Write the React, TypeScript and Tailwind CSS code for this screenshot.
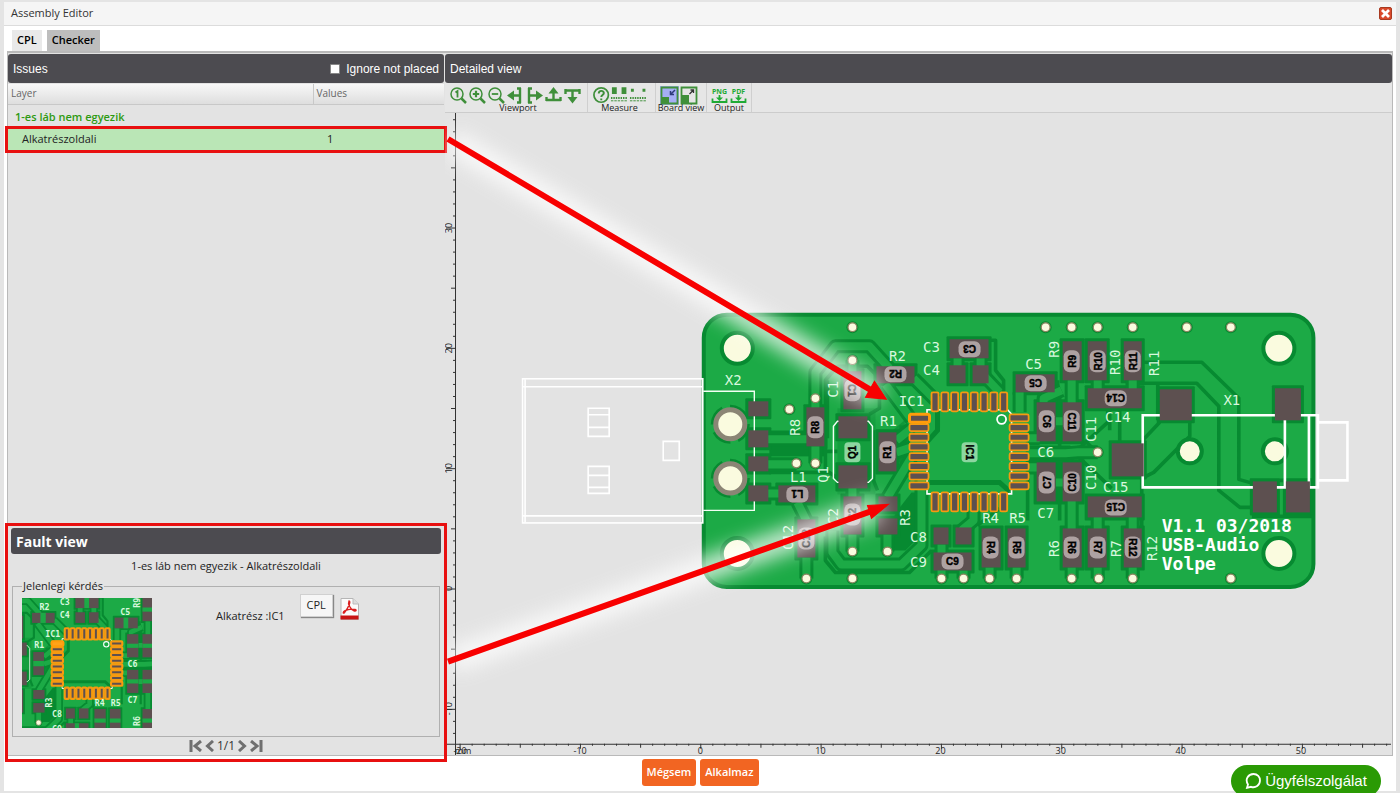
import { ReactNode, useState } from 'react';

type Rect = [x: number, y: number, w: number, h: number];
type Label = [text: string, x: number, y: number, rotate: number];

const BOARD = '#1caa46';
const CLEARANCE = '#078a31';
const PAD = '#5d5050';
const HOLE = '#fafbdf';

const pads: Rect[] = [
   [749, 401, 20, 15], [749, 430, 20, 17], [749, 456, 20, 15], [749, 485, 20, 16],
   [839, 416, 29, 22], [839, 465, 29, 23], [879, 496, 19, 15], [879, 518, 19, 16],
   [844, 371, 18, 38], [877, 366, 38, 17], [807, 407, 18, 39], [879, 432, 18, 39],
   [844, 496, 18, 38], [779, 485, 37, 17], [798, 519, 18, 38],
   [950, 339, 39, 19], [950, 365, 16, 18], [973, 365, 16, 18], [1016, 374, 39, 18],
   [1037, 402, 19, 39], [1063, 402, 19, 39], [1037, 462, 19, 39], [1063, 462, 19, 39],
   [1063, 341, 19, 39], [1088, 341, 19, 39], [1124, 341, 18, 39],
   [1088, 388, 54, 20], [1088, 496, 54, 21],
   [1063, 528, 19, 39], [1088, 528, 19, 39], [1124, 528, 18, 39],
   [982, 528, 19, 39], [1008, 528, 18, 39],
   [934, 527, 15, 17], [956, 527, 16, 17], [934, 552, 38, 18],
   [1160, 389, 32, 31], [1112, 443, 32, 33], [1275, 388, 26, 32], [1253, 481, 24, 31], [1286, 481, 24, 31],
];

// narrow gaps between two pads that no designator covers
const thumbGaps: Rect[] = [
   [891, 366, 9, 17], [879, 447, 18, 9], [965, 339, 8, 19], [1031, 374, 8, 18],
   [1037, 418, 19, 7], [1063, 418, 19, 7], [1037, 478, 19, 7], [1063, 478, 19, 7],
   [982, 544, 19, 7], [1008, 544, 18, 7], [1063, 544, 19, 7], [949, 552, 7, 18], [1063, 357, 19, 7],
];

const badges: Label[] = [
   ['C1', 853, 390, 90], ['R2', 896, 374, 180], ['R8', 816, 427, -90], ['R1', 888, 452, -90], ['C2', 853, 514, -90],
   ['L1', 798, 494, 180], ['C12', 807, 538, -90], ['C3', 970, 349, 180], ['C5', 1036, 383, 180],
   ['C6', 1047, 421, 90], ['C11', 1072, 421, 90], ['C7', 1047, 482, -90], ['C10', 1072, 482, -90],
   ['R9', 1072, 361, -90], ['R10', 1098, 361, -90], ['R11', 1133, 361, -90], ['C14', 1116, 398, 180], ['C15', 1116, 507, 180],
   ['R6', 1072, 547, 90], ['R7', 1098, 547, 90], ['R12', 1133, 547, 90], ['R4', 991, 547, 90], ['R5', 1017, 547, 90],
   ['C9', 953, 561, 0],
];

const silk: Label[] = [
   ['X2', 734, 380, 0], ['C1', 834, 389, -90], ['IC1', 912, 401, 0], ['R1', 889, 421, 0], ['R2', 898, 356, 0],
   ['C3', 932, 347, 0], ['C4', 932, 370, 0], ['C5', 1034, 364, 0], ['R9', 1054, 349, -90], ['R10', 1115, 362, -90],
   ['R11', 1154, 363, -90], ['C14', 1118, 417, 0], ['X1', 1232, 400, 0], ['C11', 1091, 429, -90], ['C10', 1091, 477, -90],
   ['C6', 1046, 452, 0], ['C7', 1046, 513, 0], ['C15', 1116, 487, 0], ['R8', 796, 427, -90], ['Q1', 824, 474, -90],
   ['L1', 799, 477, 0], ['C2', 834, 516, -90], ['R3', 906, 517, -90], ['C12', 789, 537, -90], ['R4', 991, 518, 0],
   ['R5', 1018, 518, 0], ['C8', 919, 537, 0], ['C9', 919, 562, 0], ['R6', 1054, 548, -90], ['R7', 1116, 548, -90],
   ['R12', 1152, 548, -90],
];

const vias: [number, number][] = [
   [853, 327], [853, 360], [816, 398], [790, 409], [797, 463], [816, 463], [853, 551], [888, 551], [807, 578], [853, 578],
   [1046, 327], [1072, 327], [1098, 327], [1133, 327], [1187, 327], [1231, 327], [1098, 452], [942, 578], [964, 578],
   [990, 578], [1017, 578], [1072, 578], [1099, 578], [1133, 578], [1231, 578],
];

// tracks that show as a pair of clearance lines
const tracks = [
   'M816 410V372L836 346H870L890 368',
   'M853 372V360M853 486V498M853 534V551M888 534V551M816 446V463M807 557V578M798 502L807 520',
   'M767 439H808M767 464H797M767 493H780',
   'M897 452L912 447M897 440L912 428M914 378L936 400M886 384L912 419M888 497L912 457',
   'M833 530V552L842 564H902L922 545V478',
   'M1028 453H1066L1078 452H1098M1028 438L1040 438M1028 467H1040M1020 412V392M1044 402V398L1062 390',
   'M1072 380V404M1098 380V390M1133 380V390M1072 500V530M1098 516V530M1133 516V530',
   'M981 358V366M958 358V366M983 374L1000 392M942 544V578M964 570V578M990 567V578M1017 567V578M1072 567V578M1098 567V578M1133 567V578',
   'M974 511V520L962 530M1056 482H1064M1056 421H1064',
];

// isolation lines in the ground pour
const isolation = [
   'M1142 362H1202L1239 398V479L1253 483',
   'M1126 383H1197L1219 406V490L1240 507H1254',
   'M1158 384V420M1160 422L1143 440M1190 420V436L1154 472L1142 478V540',
   'M928 482H1000L1012 492M940 412V432L930 441',
   'M1028 447H1070L1075 452L1108 422V408M1028 461H1070L1076 454L1112 488',
   'M826 470V380L838 366H868L880 378V408L870 414M828 438V380',
   'M826 536V560L836 572H910L932 550',
   'M770 432H806M770 472H830L842 480M826 451H838M874 430V480M874 480L878 490',
   'M989 340H996V370L1004 380V392M1000 508L978 525',
   'M1028 440V520M1060 392V520M1085 440L1100 455',
   'M1110 408V430M1120 410V444M1058 400V380',
   'M1250 480H1312M1252 516H1312',
];

function PcbBoard({ thumb = false }: { thumb?: boolean }) {
   const pins: Rect[] = [];
   for (let i = 0; i < 8; i++) {
      const across = 932 + i * 9.8;
      const down = 414 + i * 9.7;
      pins.push([across, 392, 7, 19], [across, 492, 7, 19], [910, down, 19, 7], [1010, down, 19, 7]);
   }
   const names = thumb ? silk.filter(([, x, y]) => x > 862 && x < 1077 && y > 343 && y < 563) : silk;

   return (
      <g>
         <rect x="704.5" y="314.5" width="609" height="272" rx="23" fill={BOARD} stroke={CLEARANCE} strokeWidth="4" />
         <g fill={CLEARANCE}>
            <rect x="770" y="445" width="56" height="11" />
            <rect x="838" y="408" width="38" height="86" opacity="0.35" />
            <rect x="900" y="425" width="10" height="52" opacity="0.7" />
            <path d="M905 420l-14 12v20l18 20z" opacity="0.6" />
            <path d="M884 534l14-24 14-18h6v46l-12 12h-22z" />
            {vias.map(([x, y]) => (
               <circle key={`${x}-${y}`} cx={x} cy={y} r="6" />
            ))}
            {pads.map(([x, y, w, h]) => (
               <rect key={`${x}-${y}`} x={x - 3} y={y - 3} width={w + 6} height={h + 6} rx="1" />
            ))}
         </g>
         <g fill="none" strokeLinejoin="round">
            <path d={isolation.join('')} stroke={CLEARANCE} strokeWidth="3.600" />
            <path d={tracks.join('')} stroke={CLEARANCE} strokeWidth="14" />
            <path d={tracks.join('')} stroke={BOARD} strokeWidth="8" />
         </g>
         <rect x="927" y="410" width="85" height="84" fill={BOARD} />
         <path d="M930 482H1000L1010 491M938 411V430L928 441" fill="none" stroke={CLEARANCE} strokeWidth="5" />

         {[[738, 348], [738, 553], [1279, 348], [1279, 553]].map(([x, y]) => (
            <circle key={`${x}-${y}`} cx={x} cy={y} r="15.5" fill={HOLE} stroke={CLEARANCE} strokeWidth="4" />
         ))}
         {[424, 478].map(y => (
            <g key={y}>
               <circle cx="731" cy={y} r="18" fill="none" stroke={CLEARANCE} strokeWidth="3" strokeDasharray="20 8" />
               <circle cx="731" cy={y} r="14.5" fill={HOLE} stroke="#8b8575" strokeWidth="5" />
            </g>
         ))}
         {[1190, 1275].map(x => (
            <circle key={x} cx={x} cy="451" r="12" fill={HOLE} stroke={CLEARANCE} strokeWidth="4" />
         ))}

         <g fill="none" stroke="#f2fff4" strokeWidth="1.4">
            <path d="M704 391H755V510H704" />
            <path d="M843 421H838L834 426V478L838 482H843M864 421H869L873 426V478L869 482H864" />
         </g>
         <g fill="none" stroke="#fff" strokeWidth="2.6">
            <path d="M1143 415H1318V487H1143ZM1285 415V487M1309 415V487" />
         </g>
         {pads.map(([x, y, w, h]) => (
            <rect key={`${x}-${y}`} x={x} y={y} width={w} height={h} fill={PAD} />
         ))}
         {thumb &&
            thumbGaps.map(([x, y, w, h]) => (
               <rect key={`${x}-${y}`} x={x} y={y} width={w} height={h} fill={BOARD} />
            ))}
         {vias.map(([x, y]) => (
            <circle key={`${x}-${y}`} cx={x} cy={y} r="4.4" fill={HOLE} stroke="#8b8560" strokeWidth="1.2" />
         ))}

         <path d="M932 409.500H1008L1012 414V493.500H927.500V409.500H932" fill="none" stroke="#fff" strokeWidth="1.6" />
         {pins.map(([x, y, w, h]) => (
            <rect
               key={`${x}-${y}`}
               x={x}
               y={y}
               width={w}
               height={h}
               rx="1.5"
               fill={PAD}
               stroke="#f69a10"
               strokeWidth={thumb ? 3.6 : 1.8}
            />
         ))}
         <rect x="910" y="414" width="20" height="8" rx="2" fill={thumb ? '#ffa31a' : PAD} stroke="#ff9c0a" strokeWidth="3" />
         <circle cx="1002" cy="419" r="4.5" fill="none" stroke="#fff" strokeWidth="1.8" />

         <g
            fill="#d8f8de"
            fontSize="14"
            fontWeight={thumb ? 700 : 400}
            textAnchor="middle"
            className="font-['DejaVu_Sans_Mono',monospace]"
         >
            {names.map(([text, x, y, rotate]) => (
               <text key={text} x={x} y={y + 5} transform={`rotate(${rotate} ${x} ${y})`}>
                  {text}
               </text>
            ))}
         </g>
         {!thumb && (
            <>
               <g fill="#fff" fontSize="18" fontWeight="700" className="font-['DejaVu_Sans_Mono',monospace]">
                  <text x="1162" y="532">V1.1 03/2018</text>
                  <text x="1162" y="551">USB-Audio</text>
                  <text x="1162" y="570">Volpe</text>
               </g>
               <g fontSize="10" fontWeight="700" textAnchor="middle" className="font-['Liberation_Sans',Arial,sans-serif]">
                  {badges.map(([text, x, y, rotate]) => (
                     <g key={text} transform={`rotate(${rotate} ${x} ${y})`}>
                        <rect x={x - 11} y={y - 8} width="22" height="16" rx="6" fill="#aea2a2" />
                        <text x={x} y={y + 4} fill="#000" stroke="#000" strokeWidth="0.4">
                           {text}
                        </text>
                     </g>
                  ))}
                  {[[853, 'Q1', -90], [970, 'IC1', 90]].map(([x, text, rotate]) => (
                     <g key={text} transform={`rotate(${rotate} ${x} 452)`}>
                        <rect x={Number(x) - 10} y="444" width="20" height="16" rx="4" fill="#8dd6a0" />
                        <text x={x} y="456" fill="#000" stroke="#000" strokeWidth="0.4">
                           {text}
                        </text>
                     </g>
                  ))}
               </g>
            </>
         )}
      </g>
   );
}

function Rulers() {
   const xUnits = Array.from({ length: 78 }, (_, i) => i - 20);
   const yUnits = Array.from({ length: 52 }, (_, i) => i - 12);
   const tick = (unit: number) => (unit % 10 === 0 ? 5 : unit % 5 === 0 ? 4 : 2);

   return (
      <g stroke="#333" strokeWidth="1">
         <path d="M456.500 113V755M446 743.500H1391" />
         {xUnits.map(unit => (
            <path key={unit} d={`M${701.5 + unit * 12.02} 743v${tick(unit)}`} />
         ))}
         {yUnits.map(unit => (
            <path key={unit} d={`M457 ${588.5 - unit * 12.02}h${unit % 10 === 0 ? -10 : -tick(unit) - 1}`} />
         ))}
         <g stroke="none" fill="#222" fontSize="9" textAnchor="middle" className="font-['Open_Sans',sans-serif]">
            {[-20, -10, 0, 10, 20, 30, 40, 50].map(unit => (
               <text key={unit} x={701 + unit * 12} y="753">
                  {unit}
               </text>
            ))}
            <text x="464" y="753">mm</text>
            {[-10, 0, 10, 20, 30].map(unit => (
               <text key={unit} transform={`translate(453 ${588 - unit * 12}) rotate(-90)`}>
                  {unit}
               </text>
            ))}
         </g>
      </g>
   );
}

function BoardCanvas() {
   return (
      <svg viewBox="446 113 946 642" preserveAspectRatio="xMinYMin slice" className="block h-full w-full" role="img" aria-label="Board">
         <defs>
            <filter id="glow" filterUnits="userSpaceOnUse" x="430" y="100" width="520" height="620">
               <feGaussianBlur stdDeviation="10" />
            </filter>
         </defs>
         <Rulers />
         <PcbBoard />
         <g fill="none" stroke="#fff" strokeWidth="1.6">
            <rect x="523.500" y="378.500" width="180" height="144" />
            <path d="M526 379V522M524 386.500H703M524 515.500H703" />
            <path d="M589 408h21v28h-21zM589 414.500h21M589 427h21M589 466h21v27h-21zM589 475h21M589 487h21M664 441h16v19h-16z" />
         </g>
         <path d="M1318 422H1347.500V480H1318" fill="none" stroke="#fff" strokeWidth="2.600" />
         <g filter="url(#glow)" stroke="#fff" strokeWidth="24" fill="none" opacity="0.8">
            <path d="M452 141L880 395" />
            <path d="M452 660L880 507" />
         </g>
         <g stroke="#f80000" strokeWidth="6">
            <path d="M449 139L872 390M449 661L874 510" />
            <path d="M887 399L866 397L875 381ZM889 504L872 518L868 505Z" fill="#f80000" strokeWidth="1" />
         </g>
      </svg>
   );
}

function ToolIcon({ label, children, active = false }: { label: string; children: ReactNode; active?: boolean }) {
   return (
      <button type="button" aria-label={label} className={active ? 'size-[19px] bg-[#a5aef5]' : 'size-[19px]'}>
         <svg viewBox="0 0 19 19" className="block size-full" fill="none" stroke="#3f8f3a" strokeWidth="1.8">
            {children}
         </svg>
      </button>
   );
}

function ToolGroup({ label, className, children }: { label: string; className: string; children: ReactNode }) {
   return (
      <div role="group" aria-label={label} className={`flex h-full flex-col border-r border-[#cfcfcf] pt-[3px] ${className}`}>
         <div className="flex">{children}</div>
         <div className="-mt-px flex justify-center whitespace-nowrap text-[9px] leading-[8px] text-[#222]">{label}</div>
      </div>
   );
}

const lens = (
   <>
      <circle cx="8" cy="8" r="6" strokeWidth="1.5" />
      <path d="M12.500 12.500L17 17" strokeWidth="2.500" />
   </>
);

function Toolbar() {
   return (
      <div className="flex h-[30px] shrink-0 border-b border-[#cccccc] bg-[#e6e6e6]">
         <ToolGroup label="Viewport" className="w-[143px] pl-1">
            <ToolIcon label="Zoom 1:1">
               {lens}
               <path d="M6.500 6.500L8.500 5V11.500" />
            </ToolIcon>
            <ToolIcon label="Zoom in">
               {lens}
               <path d="M8 4.800V11.200M4.800 8H11.200" strokeWidth="2.200" />
            </ToolIcon>
            <ToolIcon label="Zoom out">
               {lens}
               <path d="M4.800 8H11.200" />
            </ToolIcon>
            <ToolIcon label="Align left">
               <path d="M14 2V17M11 2.500H15M11 16.500H15M14 9.500H6" strokeWidth="2.400" />
               <path d="M1 9.500L8 4.500V14.500Z" fill="#3f8f3a" stroke="none" />
            </ToolIcon>
            <ToolIcon label="Align right">
               <path d="M4 2V17M3 2.500H7M3 16.500H7M4 9.500H13" strokeWidth="2.400" />
               <path d="M18 9.500L11 4.500V14.500Z" fill="#3f8f3a" stroke="none" />
            </ToolIcon>
            <ToolIcon label="Align top">
               <path d="M2 14H17M2.500 11V15M16.500 11V15M9.500 14V6" strokeWidth="2.400" />
               <path d="M9.500 1L14.500 7.500H4.500Z" fill="#3f8f3a" stroke="none" />
            </ToolIcon>
            <ToolIcon label="Align bottom">
               <path d="M2 4.500H17M2.500 3V8M16.500 3V8M9.500 5V13" strokeWidth="2.400" />
               <path d="M9.500 17.500L14.500 11H4.500Z" fill="#3f8f3a" stroke="none" />
            </ToolIcon>
         </ToolGroup>
         <ToolGroup label="Measure" className="w-17 pl-1 pr-2">
            <ToolIcon label="Help">
               <circle cx="9.500" cy="9" r="7.500" />
               <path d="M7 7.500C7 3.800 12.300 4 12.300 7C12.300 9 9.600 9 9.600 11M9.600 12.500V14.500" strokeWidth="2" />
            </ToolIcon>
            <ToolIcon label="Measure pads">
               <path d="M2 1H7V8H2ZM12 1H17V8H12Z" fill="#3f8f3a" stroke="none" />
               <path d="M1 12H18" strokeDasharray="1.500 1" strokeWidth="2" />
               <path d="M1 15H18" strokeDasharray="2.500 1" strokeWidth="1" />
            </ToolIcon>
            <ToolIcon label="Measure points">
               <path d="M2 2.500H5V5.500H2ZM14 2.500H17V5.500H14Z" fill="#3f8f3a" stroke="none" />
               <path d="M1 12H18" strokeDasharray="1.500 1" strokeWidth="2" />
               <path d="M1 15H18" strokeDasharray="2.500 1" strokeWidth="1" />
            </ToolIcon>
         </ToolGroup>
         <ToolGroup label="Board view" className="w-[51px] px-1">
            <ToolIcon label="Fit board" active>
               <path d="M1.500 1.500H17.500V17.500H1.500Z" />
               <path d="M1 11H9V18H1Z" fill="#3f8f3a" stroke="none" />
               <path d="M15 4L10.500 8.500M10.500 5V8.500H14" stroke="#2d3a7a" strokeWidth="1.500" />
            </ToolIcon>
            <ToolIcon label="Expand board">
               <path d="M2.500 1.500H17.500V17.500H2.500Z" />
               <path d="M2 9H10V18H2Z" fill="#3f8f3a" stroke="none" />
               <path d="M10.500 8L14.500 4M11.500 4H14.500V7" stroke="#333" strokeWidth="1.300" />
            </ToolIcon>
         </ToolGroup>
         <ToolGroup label="Output" className="w-[45px] px-[3px]">
            {['PNG', 'PDF'].map(format => (
               <ToolIcon key={format} label={format}>
                  <text x="9.500" y="8" fontSize="7" fontWeight="700" textAnchor="middle" fill="#1faa35" stroke="none">
                     {format}
                  </text>
                  <path d="M2.500 12.500V16H16.500V12.500M9.500 9V13" stroke="#1faa35" />
                  <path d="M6 11.500H13L9.500 15Z" fill="#1faa35" stroke="none" />
               </ToolIcon>
            ))}
         </ToolGroup>
      </div>
   );
}

function PagerButton({ label, path, width }: { label: string; path: string; width: string }) {
   return (
      <button type="button" aria-label={label}>
         <svg viewBox={`0 0 ${width} 12`} width={width} height="12" fill="none" stroke="#6f6f6f" strokeWidth="3">
            <path d={path} />
         </svg>
      </button>
   );
}

function FaultView() {
   return (
      <section className="relative h-[230px] shrink-0 px-[3px] pt-[3px]">
         <h2 className="flex h-[26px] items-center rounded-[3px] bg-[#4c4b50] px-[5px] text-[14px] font-bold text-white">Fault view</h2>
         <p className="pt-[3px] text-center text-[11px] leading-[18px] text-[#222]">1-es láb nem egyezik - Alkatrészoldali</p>
         <fieldset className="mx-px mt-0.5 h-[160px] border border-[#b0b0b0] px-[9px] text-[11px] text-[#222]">
            <legend className="px-px leading-[18px]">Jelenlegi kérdés</legend>
            <div className="mt-[3px] flex items-start">
               <svg viewBox="860 341 219 219" className="h-[130px] w-[130px] shrink-0">
                  <PcbBoard thumb />
               </svg>
               <span className="ml-16 mt-2.5">Alkatrész :IC1</span>
               <button
                  type="button"
                  className="-mt-1 ml-[15px] h-[23px] w-[33px] border border-[#d0d0d0] bg-[#f6f6f6] shadow-[1px_1px_1px_#888888]"
               >
                  CPL
               </button>
               <button type="button" aria-label="PDF" className="ml-[7px]">
                  <svg viewBox="0 0 19 22" className="block h-[22px] w-[19px]">
                     <path d="M1 0.500H13L18.500 6V21.500H1Z" fill="#fbfbfb" stroke="#b5b5b5" />
                     <path d="M13 0.500V6H18.500" fill="#ddd" stroke="#bbb" />
                     <path d="M0.500 17.500H18.500V21.500H0.500Z" fill="#c81414" />
                     <path
                        d="M9 3C11 3 9 9 4.500 14.500C3 16.300 2.500 14 5 12.700C8 11.300 12 10.800 15 11.500C17 12 16 13.500 14 12.800C10.500 11.500 7.500 6 9 3Z"
                        fill="none"
                        stroke="#db1f1f"
                        strokeWidth="1.400"
                     />
                  </svg>
               </button>
            </div>
         </fieldset>
         <nav aria-label="Faults" className="flex h-[18px] items-center justify-center gap-[3px] text-[12px] text-[#333]">
            <PagerButton label="First" width="13" path="M2 0V12M12 1L6 6L12 11" />
            <PagerButton label="Previous" width="9" path="M8 1L2.500 6L8 11" />
            <span>1/1</span>
            <PagerButton label="Next" width="9" path="M1 1L6.500 6L1 11" />
            <PagerButton label="Last" width="13" path="M1 1L7 6L1 11M11 0V12" />
         </nav>
         <div className="pointer-events-none absolute -bottom-[7px] -left-[3px] -right-[3px] -top-[2px] border-3 border-[#e81010]" />
      </section>
   );
}

function IssuesPanel() {
   const [ignore, setIgnore] = useState(false);

   return (
      <div className="flex w-[436px] shrink-0 flex-col">
         <div className="flex h-[29px] shrink-0 items-center justify-between rounded-[3px] bg-[#4c4b50] px-[5px] font-['Liberation_Sans',Arial,sans-serif] text-[12px] text-white">
            <h2>Issues</h2>
            <label className="flex items-center gap-[6px]">
               <input
                  type="checkbox"
                  checked={ignore}
                  onChange={e => setIgnore(e.target.checked)}
                  className="size-[10px] appearance-none rounded-[1px] border border-[#888888] bg-white checked:bg-[#2d9a10]"
               />
               Ignore not placed
            </label>
         </div>
         <table className="mt-px w-full table-fixed border-collapse text-left text-[11px]">
            <thead>
               <tr className="h-5 bg-linear-to-b from-[#f8f8f8] to-[#dedede] text-[10px] text-[#666666]">
                  <th className="w-[305px] border-b border-[#c8c8c8] p-0 pl-[3px] font-normal">Layer</th>
                  <th className="border-b border-l border-[#c8c8c8] p-0 pl-[3px] font-normal">Values</th>
               </tr>
            </thead>
            <tbody>
               <tr className="h-[25px]">
                  <th colSpan={2} className="p-0 pl-[7px] font-semibold text-[#2d9a10]">
                     1-es láb nem egyezik
                  </th>
               </tr>
               <tr className="h-[21px] bg-[#bae6b6] text-[#222] outline-3 outline-[#e81010]">
                  <td className="p-0 pl-[14px]">Alkatrészoldali</td>
                  <td className="p-0 pl-[14px]">1</td>
               </tr>
            </tbody>
         </table>
         <div className="flex-1" />
         <FaultView />
      </div>
   );
}

export default function App() {
   return (
      <div className="h-screen bg-[#e4e4e4] px-1 py-0.5 font-['Open_Sans',sans-serif] text-black">
         <div className="flex h-full flex-col bg-white">
            <header className="flex h-6 shrink-0 items-center justify-between border-b border-[#dcdcdc] bg-[#f5f5f5] pl-[7px] pr-1 text-[11px] text-[#333]">
               <h1>Assembly Editor</h1>
               <button type="button" aria-label="Close" className="flex size-[13px] items-center justify-center rounded-[2px] border border-[#a83a20] bg-[#d9492b]">
                  <svg viewBox="0 0 9 9" className="size-[9px]" stroke="#fff" strokeWidth="2.800">
                     <path d="M1 1L8 8M8 1L1 8" />
                  </svg>
               </button>
            </header>
            <div className="flex h-[25px] shrink-0 items-end gap-[5px] pl-2 text-[11px] font-semibold">
               <button type="button" className="h-[21px] bg-[#e9e9e9] px-[5px]">CPL</button>
               <button type="button" className="h-[21px] bg-[#bdbdbd] px-[5px]">Checker</button>
            </div>
            <main className="ml-[3px] mr-[3px] flex min-h-0 flex-1 gap-px border border-t-2 border-[#b9b9b9] bg-[#e3e3e3] pt-px">
               <IssuesPanel />
               <section className="flex min-w-0 flex-1 flex-col">
                  <h2 className="flex h-[29px] shrink-0 items-center rounded-[3px] bg-[#4c4b50] px-[5px] font-['Liberation_Sans',Arial,sans-serif] text-[12px] text-white">
                     Detailed view
                  </h2>
                  <Toolbar />
                  <div className="min-h-0 flex-1">
                     <BoardCanvas />
                  </div>
               </section>
            </main>
            <footer className="flex h-[35px] shrink-0 items-start justify-center gap-1 pt-[3px] text-[11px] font-semibold text-white">
               <button type="button" className="h-[27px] rounded-[3px] bg-[#f26522] px-[5px]">Mégsem</button>
               <button type="button" className="h-[27px] rounded-[3px] bg-[#f26522] px-[5px]">Alkalmaz</button>
            </footer>
         </div>
         <button
            type="button"
            className="fixed -bottom-1 right-[19px] flex h-8 w-[150px] items-center justify-center gap-1 rounded-full bg-[#2a9a04] font-['Liberation_Sans',Arial,sans-serif] text-[15px] text-white"
         >
            <svg viewBox="0 0 16 16" className="size-4" fill="none" stroke="#fff" strokeWidth="1.800">
               <path d="M3 14.500L2 14.800L3 11.500C-0.500 6 3.500 1 8.500 1C12.500 1 15 4 15 7.500C15 12 10.500 15.500 6 13.800L2 14.800" />
            </svg>
            Ügyfélszolgálat
         </button>
      </div>
   );
}
